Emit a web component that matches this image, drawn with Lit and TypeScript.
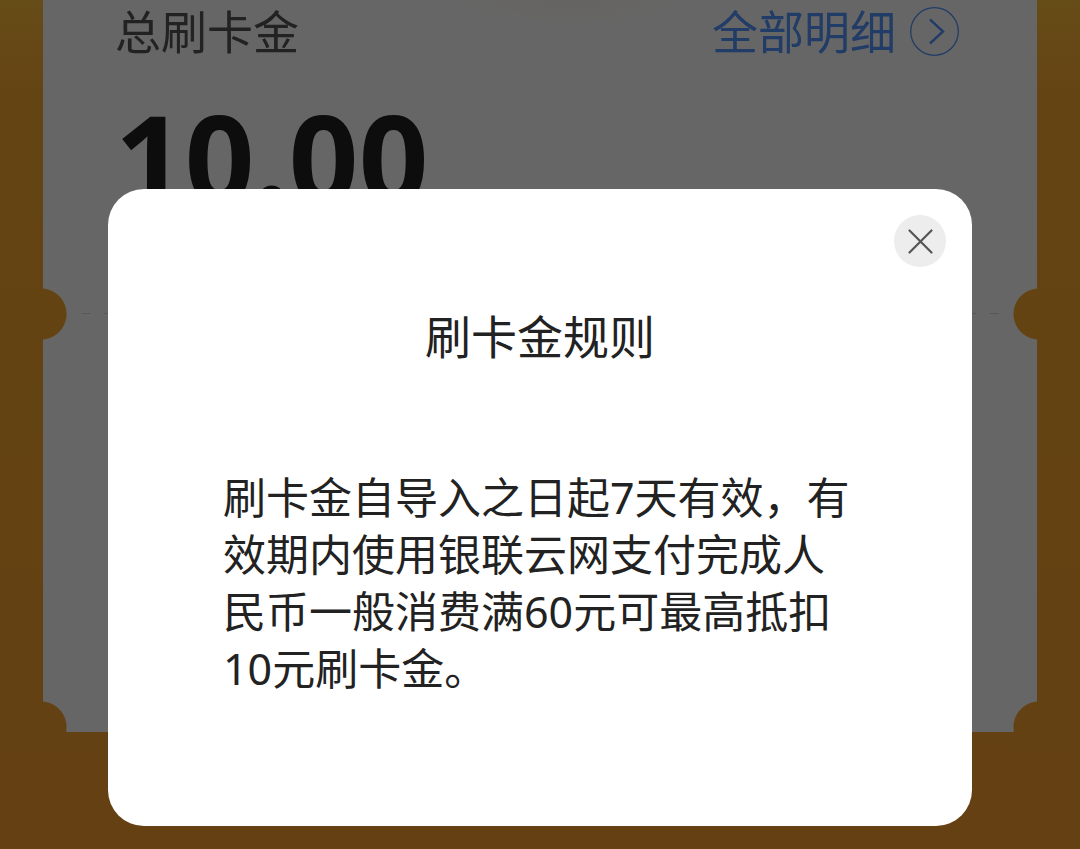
import { LitElement, html, css } from "lit";
import { customElement, state } from "lit/decorators.js";

@customElement("app-root")
export class AppRoot extends LitElement {
  @state() private open = true;

  static styles = css`
    :host {
      display: block;
      font-family: "Noto Sans", "Noto Sans CJK SC", sans-serif;
      color: #222;
    }
    .page {
      box-sizing: border-box;
      min-height: 100vh;
      padding: 0 43px 117px;
      overflow: hidden;
      background: linear-gradient(#ffbe3c, #fcab32 90px, #fba72f 50%, #faa02d);
      display: flex;
      flex-direction: column;
    }
    .ticket {
      flex: 1;
      background: radial-gradient(ellipse 110px 24px at 53% 0, #fffaf0, #fff);
      mask-image: radial-gradient(circle at -2px 314px, transparent 25px, #000 26px),
        radial-gradient(circle at calc(100% + 2px) 314px, transparent 25px, #000 26px),
        radial-gradient(circle at -2px 727px, transparent 25px, #000 26px),
        radial-gradient(circle at calc(100% + 2px) 727px, transparent 25px, #000 26px);
      mask-composite: intersect;
    }
    .summary {
      box-sizing: border-box;
      height: 313px;
      padding: 0 78px 0 72px;
    }
    .row {
      display: flex;
      align-items: center;
      justify-content: space-between;
      font-size: 46px;
      line-height: 62px;
    }
    .label {
      color: #555;
    }
    .details {
      display: flex;
      align-items: center;
      gap: 14px;
      color: #5496ff;
      text-decoration: none;
    }
    .arrow {
      width: 49px;
      height: 49px;
    }
    .amount {
      margin: 34px 0 0;
      font-size: 122px;
      line-height: 122px;
      font-weight: 700;
    }
    .tear {
      height: 1px;
      margin: 0 25px 0 39px;
      background: linear-gradient(90deg, #ddd 41%, transparent 41%) 0 0 / 22px 1px round;
    }
    .overlay {
      position: fixed;
      inset: 0;
      padding: 189px 10% 0;
      background: rgba(0, 0, 0, 0.6);
    }
    .dialog {
      box-sizing: border-box;
      padding: 26px 26px 129px;
      border-radius: 36px;
      background: #fff;
      display: flex;
      flex-direction: column;
    }
    .close {
      align-self: flex-end;
      width: 52px;
      height: 52px;
      padding: 0;
      border: 0;
      border-radius: 50%;
      background: #ededed;
      color: #555;
    }
    .cross {
      display: block;
      width: 52px;
      height: 52px;
    }
    .title {
      margin: 39px 0 0;
      font-size: 46px;
      line-height: 60px;
      font-weight: 400;
      text-align: center;
    }
    .rules {
      margin: 103px 89px 0;
      font-size: 43px;
      line-height: 57px;
    }
  `;

  private close() {
    this.open = false;
  }

  render() {
    return html`
      <main class="page">
        <section class="ticket">
          <div class="summary">
            <div class="row">
              <span class="label">总刷卡金</span>
              <a class="details" href="#details">
                全部明细
                <svg class="arrow" viewBox="0 0 49 49" fill="none" stroke="currentColor" aria-hidden="true">
                  <circle cx="24.5" cy="24.5" r="23.8" stroke-width="1.3" />
                  <path d="M20 12.5 33 24.5 20 36.5" stroke-width="2.4" />
                </svg>
              </a>
            </div>
            <p class="amount">10.00</p>
          </div>
          <div class="tear"></div>
        </section>
      </main>
      ${this.open
        ? html`<div class="overlay">
            <div class="dialog" role="dialog" aria-modal="true" aria-labelledby="title">
              <button class="close" type="button" aria-label="关闭" @click=${this.close}>
                <svg class="cross" viewBox="0 0 52 52" fill="none" stroke="currentColor" aria-hidden="true">
                  <path d="M15.5 15.5 37.5 37.5M37.5 15.5 15.5 37.5" stroke-width="2.2" stroke-linecap="round" />
                </svg>
              </button>
              <h1 class="title" id="title">刷卡金规则</h1>
              <p class="rules">刷卡金自导入之日起7天有效，有效期内使用银联云网支付完成人民币一般消费满60元可最高抵扣10元刷卡金。</p>
            </div>
          </div>`
        : ""}
    `;
  }
}
